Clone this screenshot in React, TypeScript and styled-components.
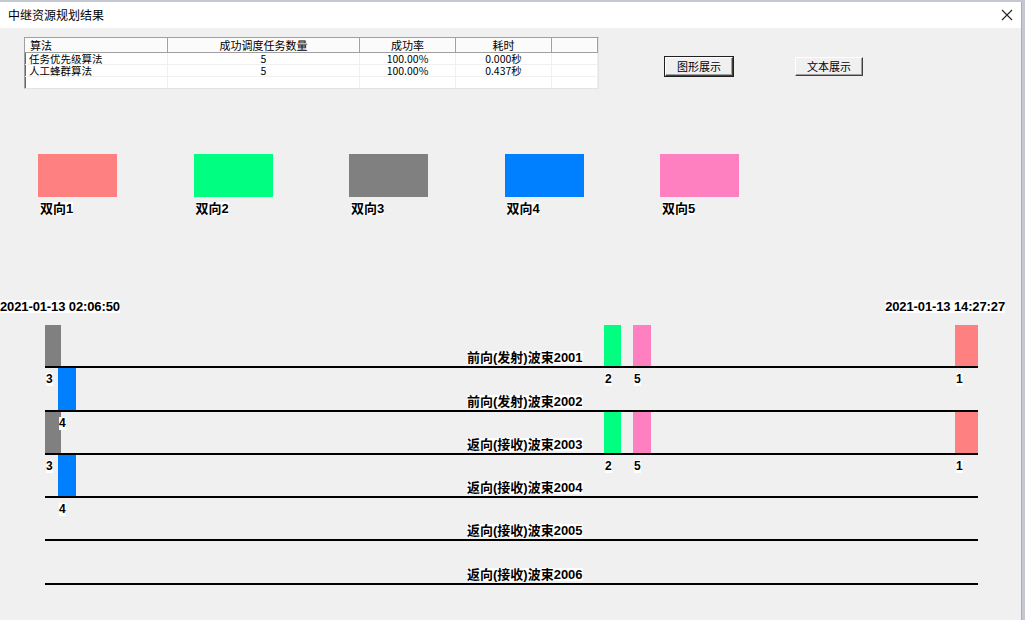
import React from "react";
import styled, { createGlobalStyle } from "styled-components";

const GlobalStyle = createGlobalStyle`
  html, body {
    margin: 0;
    padding: 0;
    background: #c4c8d0;
    font-family: "Noto Sans CJK SC", "Liberation Sans", sans-serif;
  }
`;

const legend = [
  { id: 1, name: "双向1", color: "#ff8080" },
  { id: 2, name: "双向2", color: "#00ff80" },
  { id: 3, name: "双向3", color: "#808080" },
  { id: 4, name: "双向4", color: "#0080ff" },
  { id: 5, name: "双向5", color: "#ff80c0" },
];

const colorOf = (id: number) => legend.find((l) => l.id === id)?.color ?? "#000";

interface BarItem {
  task: number;
  left: number;
  width: number;
}

const fullLane: BarItem[] = [
  { task: 3, left: 0, width: 16 },
  { task: 2, left: 559, width: 17 },
  { task: 5, left: 588, width: 18 },
  { task: 1, left: 910, width: 23 },
];

const blueLane: BarItem[] = [{ task: 4, left: 13, width: 18 }];

const lanes: { name: string; bars: BarItem[] }[] = [
  { name: "前向(发射)波束2001", bars: fullLane },
  { name: "前向(发射)波束2002", bars: blueLane },
  { name: "返向(接收)波束2003", bars: fullLane },
  { name: "返向(接收)波束2004", bars: blueLane },
  { name: "返向(接收)波束2005", bars: [] },
  { name: "返向(接收)波束2006", bars: [] },
];

const columns = [
  { title: "算法", left: true },
  { title: "成功调度任务数量" },
  { title: "成功率" },
  { title: "耗时" },
  { title: "" },
];

const results = [
  ["任务优先级算法", "5", "100.00%", "0.000秒", ""],
  ["人工蜂群算法", "5", "100.00%", "0.437秒", ""],
  ["", "", "", "", ""],
];

export default function App() {
  return (
    <>
      <GlobalStyle />
      <Window>
        <TitleBar>
          <Title>中继资源规划结果</Title>
          <CloseIcon width="12" height="12" viewBox="0 0 12 12">
            <path d="M1 1 L11 11 M11 1 L1 11" stroke="#222" strokeWidth="1.1" />
          </CloseIcon>
        </TitleBar>
        <Client>
          <TopRow>
            <ListView>
              {columns.map((c, i) => (
                <HeaderCell key={i} $left={c.left}>
                  {c.title}
                </HeaderCell>
              ))}
              {results.map((row, r) =>
                row.map((v, i) => (
                  <Cell key={`${r}-${i}`} $left={i === 0} $last={r === results.length - 1}>
                    {v}
                  </Cell>
                ))
              )}
            </ListView>
            <ButtonGroup>
              <Button $default>图形展示</Button>
              <Button>文本展示</Button>
            </ButtonGroup>
          </TopRow>

          <Legend>
            {legend.map((l) => (
              <LegendItem key={l.id}>
                <Swatch $color={l.color} />
                <BoldTag>{l.name}</BoldTag>
              </LegendItem>
            ))}
          </Legend>

          <TimeRow>
            <TimeTag>2021-01-13 02:06:50</TimeTag>
            <TimeTag>2021-01-13 14:27:27</TimeTag>
          </TimeRow>

          <Lanes>
            {lanes.map((lane) => (
              <Lane key={lane.name}>
                {lane.bars.map((b) => (
                  <React.Fragment key={b.task}>
                    <Bar
                      $color={colorOf(b.task)}
                      style={{ left: b.left, width: b.width }}
                    />
                    <BarTag style={{ left: b.left + 1 }}>{b.task}</BarTag>
                  </React.Fragment>
                ))}
                <LaneTitle>{lane.name}</LaneTitle>
              </Lane>
            ))}
          </Lanes>
        </Client>
      </Window>
    </>
  );
}

const Window = styled.div`
  width: 1022px;
  height: 618px;
  margin-top: 2px;
  background: #f0f0f0;
  border-right: 1px solid #a9adb6;
  box-sizing: border-box;
  display: flex;
  flex-direction: column;
  overflow: hidden;
`;

const TitleBar = styled.div`
  height: 26px;
  flex: none;
  background: #ffffff;
  display: flex;
  align-items: center;
  justify-content: space-between;
  padding: 0 8px 1px 8px;
  box-sizing: border-box;
`;

const Title = styled.span`
  font-size: 12px;
  line-height: 14px;
  color: #000;
`;

const CloseIcon = styled.svg`
  flex: none;
`;

const Client = styled.div`
  flex: 1;
  padding-top: 9px;
  display: flex;
  flex-direction: column;
`;

const TopRow = styled.div`
  display: flex;
  align-items: flex-start;
  padding-left: 24px;
`;

const ListView = styled.div`
  width: 575px;
  height: 52px;
  box-sizing: border-box;
  background: #ffffff;
  border: 1px solid;
  border-color: #a0a0a0 #e3e3e3 #e3e3e3 #a0a0a0;
  box-shadow: inset 1px 1px 0 #696969;
  display: grid;
  grid-template-columns: 143px 192px 96px 96px 46px;
  grid-template-rows: 15px 12px 12px 11px;
  font-size: 11px;
  line-height: 12px;
  color: #000;
`;

const HeaderCell = styled.div<{ $left?: boolean }>`
  background: #fbfbfb;
  border-right: 1px solid #a0a0a0;
  border-bottom: 1px solid #a0a0a0;
  box-shadow: inset -1px 0 0 #ffffff;
  text-align: ${(p) => (p.$left ? "left" : "center")};
  padding-left: ${(p) => (p.$left ? "5px" : "0")};
  padding-top: 1px;
  white-space: nowrap;
`;

const Cell = styled.div<{ $left?: boolean; $last?: boolean }>`
  border-right: 1px solid #f0f0f0;
  border-bottom: ${(p) => (p.$last ? "none" : "1px solid #f0f0f0")};
  text-align: ${(p) => (p.$left ? "left" : "center")};
  padding-left: ${(p) => (p.$left ? "4px" : "0")};
  font-size: 10.5px;
  line-height: 11px;
  white-space: nowrap;
`;

const ButtonGroup = styled.div`
  display: flex;
  gap: 62px;
  margin-top: 20px;
  margin-left: 66px;
`;

const Button = styled.button<{ $default?: boolean }>`
  width: 68px;
  height: 19px;
  padding: 0;
  font-family: "Noto Sans CJK SC", sans-serif;
  font-size: 11px;
  line-height: 15px;
  color: #000;
  background: #f0f0f0;
  border: 1px solid;
  border-color: #ffffff #404040 #404040 #ffffff;
  box-shadow: ${(p) =>
    p.$default
      ? "0 0 0 1px #202020, inset -1px -1px 0 #a0a0a0"
      : "inset -1px -1px 0 #a0a0a0"};
`;

const Legend = styled.div`
  display: flex;
  gap: 76.5px;
  padding-left: 38px;
  margin-top: 65px;
`;

const LegendItem = styled.div`
  display: flex;
  flex-direction: column;
  align-items: flex-start;
  width: 79px;
`;

const Swatch = styled.div<{ $color: string }>`
  width: 79px;
  height: 43px;
  background: ${(p) => p.$color};
  margin-bottom: 5px;
`;

const BoldTag = styled.span`
  display: inline-block;
  background: #ffffff;
  font-family: "Liberation Sans", "Noto Sans CJK SC", sans-serif;
  font-weight: bold;
  font-size: 13px;
  line-height: 13px;
  color: #000;
  margin-left: 2px;
`;

const TimeRow = styled.div`
  display: flex;
  justify-content: space-between;
  margin-top: 85px;
  padding-right: 16px;
`;

const TimeTag = styled(BoldTag)`
  margin-left: 0;
  letter-spacing: -0.12px;
`;

const Lanes = styled.div`
  margin-top: 12px;
  margin-left: 45px;
  width: 933px;
  display: flex;
  flex-direction: column;
`;

const Lane = styled.div`
  position: relative;
  height: 43.3px;
  box-sizing: border-box;
  border-bottom: 2px solid #000;
  display: flex;
  align-items: flex-end;
  padding-left: 422px;
  padding-bottom: 2px;
`;

const Bar = styled.div<{ $color: string }>`
  position: absolute;
  top: 0;
  bottom: 0;
  background: ${(p) => p.$color};
`;

const BarTag = styled.span`
  position: absolute;
  top: calc(100% + 7px);
  z-index: 1;
  background: #ffffff;
  font-family: "Liberation Sans", sans-serif;
  font-weight: bold;
  font-size: 12px;
  line-height: 13px;
  color: #000;
`;

const LaneTitle = styled.span`
  background: #ffffff;
  font-family: "Liberation Sans", "Noto Sans CJK SC", sans-serif;
  font-weight: bold;
  font-size: 13px;
  line-height: 13px;
  color: #000;
`;
